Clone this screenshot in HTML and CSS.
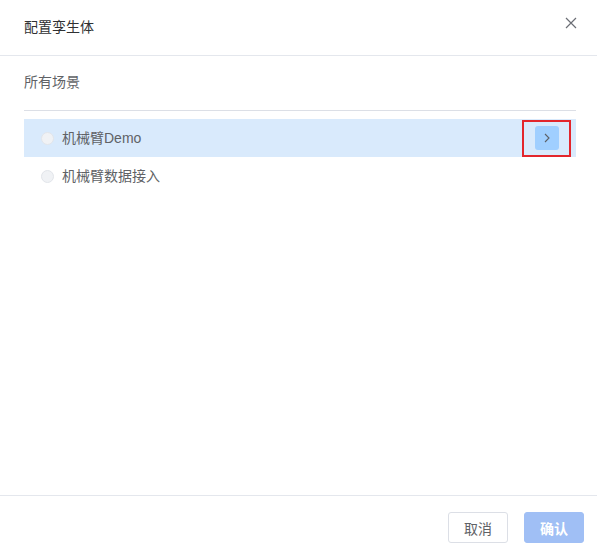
FILE: index.html
```html
<!DOCTYPE html>
<html lang="zh">
<head>
<meta charset="utf-8">
<title>配置孪生体</title>
<link rel="stylesheet" href="styles.css">
</head>
<body>
<div class="dialog">
  <header class="dlg-header">
    <span class="dlg-title">配置孪生体</span>
    <button class="dlg-close" aria-label="关闭">
      <svg width="12" height="12" viewBox="0 0 12 12"><path d="M1 1L11 11M11 1L1 11" stroke="#6b6e75" stroke-width="1.2" fill="none"/></svg>
    </button>
  </header>
  <main class="dlg-body">
    <div class="section-label">所有场景</div>
    <div class="list">
      <div class="row active">
        <span class="radio"></span>
        <span class="row-text">机械臂Demo</span>
        <span class="arrow-wrap">
          <span class="arrow-btn">
            <svg width="10" height="10" viewBox="0 0 10 10"><path d="M3 1L7 5L3 9" stroke="#5d6066" stroke-width="1.1" fill="none"/></svg>
          </span>
        </span>
      </div>
      <div class="row">
        <span class="radio"></span>
        <span class="row-text">机械臂数据接入</span>
      </div>
    </div>
  </main>
  <footer class="dlg-footer">
    <button class="btn btn-default">取消</button>
    <button class="btn btn-primary">确认</button>
  </footer>
</div>
</body>
</html>
```
FILE: styles.css
```css
* { box-sizing: border-box; }
html, body { margin: 0; padding: 0; background: #fff; }
body {
  font-family: "Liberation Sans", "Noto Sans CJK SC", sans-serif;
  font-size: 14px;
  color: #606266;
}
.dialog {
  width: 597px;
  height: 558px;
  display: flex;
  flex-direction: column;
}
.dlg-header {
  height: 56px;
  border-bottom: 1px solid #e4e7ed;
  display: flex;
  align-items: flex-start;
  justify-content: space-between;
  padding: 17px 20px 0 24px;
}
.dlg-title {
  font-size: 14px;
  line-height: 20px;
  color: #303133;
}
.dlg-close {
  border: 0;
  background: none;
  padding: 0;
  margin-top: 0;
  width: 12px;
  height: 12px;
  display: flex;
}
.dlg-body {
  flex: 1;
  padding: 16px 21px 0 24px;
}
.section-label {
  line-height: 20px;
  color: #606266;
  padding-bottom: 18px;
  border-bottom: 1px solid #dcdfe6;
  margin-right: 0;
}
.list {
  padding-top: 8px;
}
.row {
  height: 38px;
  display: flex;
  align-items: center;
  padding-left: 17px;
}
.row.active { background: #d9eafc; }
.radio {
  width: 13px;
  height: 13px;
  border-radius: 50%;
  background: #f0f2f5;
  border: 1px solid #e2e5ea;
  flex: none;
}
.row-text {
  margin-left: 8px;
  color: #606266;
  line-height: 20px;
}
.arrow-wrap {
  margin-left: auto;
  margin-right: 5px;
  width: 49px;
  height: 37px;
  border: 2px solid #e3262c;
  display: flex;
  align-items: center;
  justify-content: center;
}
.arrow-btn {
  width: 24px;
  height: 24px;
  border-radius: 3px;
  background: #a0cfff;
  display: flex;
  align-items: center;
  justify-content: center;
}
.dlg-footer {
  height: 63px;
  border-top: 1px solid #e4e7ed;
  display: flex;
  justify-content: flex-end;
  align-items: flex-start;
  gap: 16px;
  padding: 16px 13px 0 0;
}
.btn {
  width: 60px;
  height: 31px;
  border-radius: 3px;
  font-family: "Liberation Sans", "Noto Sans CJK SC", sans-serif;
  font-size: 14px;
  padding: 0;
}
.btn-default {
  background: #fff;
  border: 1px solid #dcdfe6;
  color: #606266;
}
.btn-primary {
  background: #a0bff5;
  border: 1px solid #a0bff5;
  color: #fff;
  font-weight: bold;
}
```
